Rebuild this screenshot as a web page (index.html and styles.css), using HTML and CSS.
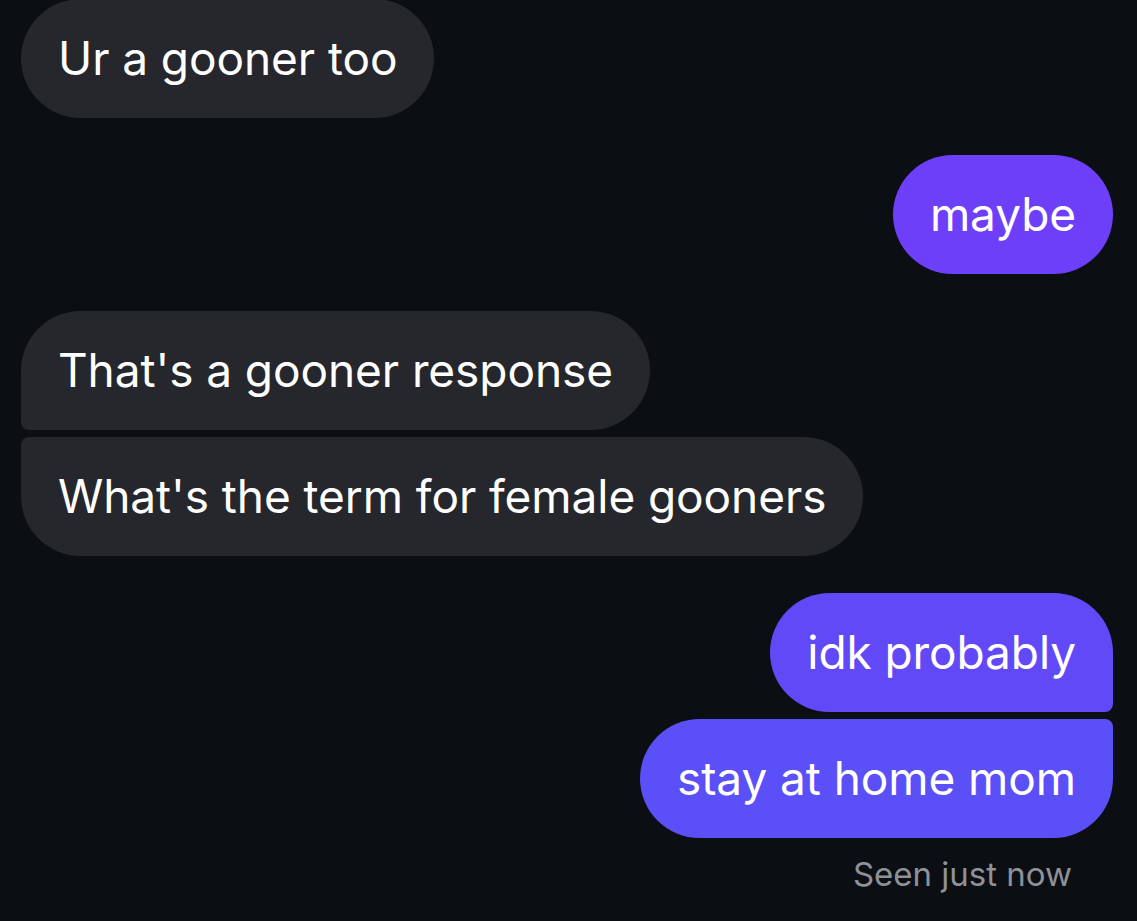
FILE: index.html
```html
<!DOCTYPE html>
<html>
<head>
<meta charset="utf-8">
<link rel="stylesheet" href="styles.css">
</head>
<body>
<div class="thread">
  <div class="group theirs">
    <div class="bubble grey single">Ur a gooner too</div>
  </div>
  <div class="group mine">
    <div class="bubble purple single c1">maybe</div>
  </div>
  <div class="group theirs">
    <div class="bubble grey first">That's a gooner response</div>
    <div class="bubble grey last">What's the term for female gooners</div>
  </div>
  <div class="group mine">
    <div class="bubble purple first c2">idk probably</div>
    <div class="bubble purple last c3">stay at home mom</div>
    <div class="seen">Seen just now</div>
  </div>
</div>
</body>
</html>
```

FILE: styles.css
```css
html, body {
  margin: 0;
  padding: 0;
  background: #0b0e13;
  height: 100%;
  overflow: hidden;
}
body {
  font-family: "Inter", "Liberation Sans", sans-serif;
  color: #ffffff;
}
.thread {
  display: flex;
  flex-direction: column;
  gap: 37px;
  padding: 0 24px 0 21px;
  margin-top: -1px;
}
.group {
  display: flex;
  flex-direction: column;
  gap: 7px;
}
.group.theirs { align-items: flex-start; }
.group.mine { align-items: flex-end; }
.bubble {
  height: 119px;
  box-sizing: border-box;
  padding: 0 37px 2px;
  display: flex;
  align-items: center;
  font-size: 46px;
  letter-spacing: -0.08px;
  white-space: nowrap;
  border-radius: 60px;
}
.grey { background: #25272c; }
.purple { background: #6249f8; }
.c1 { background: #6e3ff9; }
.c2 { background: #6249f8; }
.c3 { background: #5b4ff7; }
.theirs .first { border-bottom-left-radius: 8px; }
.theirs .last { border-top-left-radius: 8px; }
.mine .first { border-bottom-right-radius: 8px; }
.mine .last { border-top-right-radius: 8px; }
.seen {
  margin-top: 9px;
  margin-right: 41px;
  font-size: 33px;
  color: #8e9297;
}
```
